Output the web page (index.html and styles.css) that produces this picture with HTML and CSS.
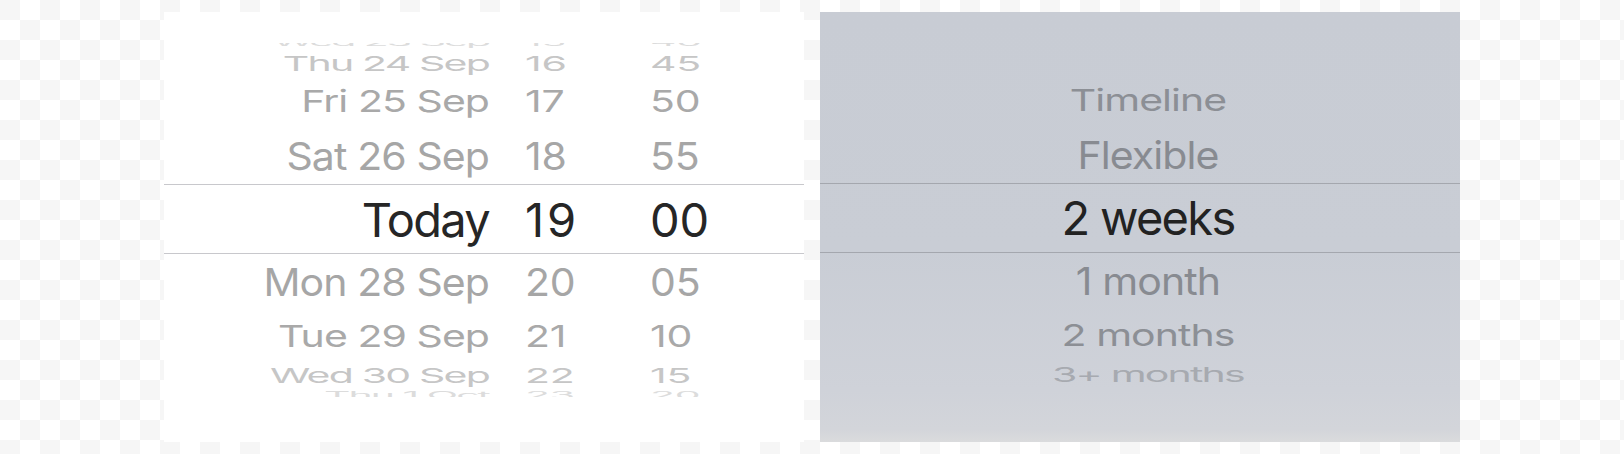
FILE: index.html
```html
<!DOCTYPE html>
<html lang="en">
<head>
<meta charset="utf-8">
<title>Pickers</title>
<link rel="stylesheet" href="styles.css">
</head>
<body>
<div class="stage">
  <div class="picker picker-date">
    <div class="clip">
      <div class="wheel">
        <div class="row r4"><span class="d">Wed 23 Sep</span><span class="h">15</span><span class="m">40</span></div>
        <div class="row r3"><span class="d">Thu 24 Sep</span><span class="h">16</span><span class="m">45</span></div>
        <div class="row r2"><span class="d">Fri 25 Sep</span><span class="h">17</span><span class="m">50</span></div>
        <div class="row r1"><span class="d">Sat 26 Sep</span><span class="h">18</span><span class="m">55</span></div>
        <div class="row sel"><span class="d">Today</span><span class="h">19</span><span class="m">00</span></div>
        <div class="row r1"><span class="d">Mon 28 Sep</span><span class="h">20</span><span class="m">05</span></div>
        <div class="row r2"><span class="d">Tue 29 Sep</span><span class="h">21</span><span class="m">10</span></div>
        <div class="row r3"><span class="d">Wed 30 Sep</span><span class="h">22</span><span class="m">15</span></div>
        <div class="row r4"><span class="d">Thu 1 Oct</span><span class="h">23</span><span class="m">20</span></div>
      </div>
    </div>
  </div>
  <div class="picker picker-list">
    <div class="clip">
      <div class="wheel">
        <div class="row r4"></div>
        <div class="row r3"></div>
        <div class="row r2"><span class="t">Timeline</span></div>
        <div class="row r1"><span class="t">Flexible</span></div>
        <div class="row sel"><span class="t">2 weeks</span></div>
        <div class="row r1"><span class="t">1 month</span></div>
        <div class="row r2"><span class="t">2 months</span></div>
        <div class="row r3"><span class="t">3+ months</span></div>
        <div class="row r4"></div>
      </div>
    </div>
  </div>
</div>
</body>
</html>
```

FILE: styles.css
```css
* { box-sizing: border-box; }

html, body {
  margin: 0;
  padding: 0;
}

body {
  width: 1624px;
  height: 454px;
  overflow: hidden;
  font-family: "Inter", "Noto Sans", sans-serif;
  background-color: #ffffff;
  background-image: conic-gradient(#ffffff 0 25%, #f6f6f6 0 50%, #ffffff 0 75%, #f6f6f6 0);
  background-size: 40px 40px;
}

.stage {
  display: flex;
  gap: 16px;
  padding: 12px 164px;
}

.picker {
  width: 640px;
  height: 430px;
  padding-top: 31px;
}

.picker-date {
  background: #ffffff;
}

.picker-list {
  background: linear-gradient(to bottom, #c8ccd4 0%, #c9cdd5 55%, #cfd2d9 88%, #d3d5da 97%, #dadbdd 100%);
}

.clip {
  height: 354px;
  overflow: hidden;
}

.picker-date .wheel { margin-top: -9px; }
.picker-list .wheel { margin-top: -10px; }

.row {
  display: grid;
  grid-template-columns: 325px 89px 1fr;
  column-gap: 36px;
  font-size: 41px;
  white-space: nowrap;
  transform-origin: 320px 50%;
}

.row .d { text-align: right; }

.row .h,
.row .m {
  letter-spacing: -0.2px;
}

.picker-list .row {
  display: flex;
  justify-content: center;
  padding-left: 16px;
}

.row.sel {
  height: 70px;
  line-height: 66px;
  font-size: 47px;
  border-top: 1px solid #c8c8cc;
  border-bottom: 1px solid #c8c8cc;
  color: #262626;
  padding-top: 2px;
}

.row.sel .d,
.row.sel .t { letter-spacing: -1.7px; }

.row.sel .h { letter-spacing: 3px; }

.picker-list .row.sel {
  border-color: #a4a7ae;
  color: #222222;
  padding-top: 0;
  line-height: 68px;
}

.row.r1 { height: 56px; line-height: 56px; transform: scale(1, 0.94); color: #a6a6a6; }
.row.r2 { height: 53px; line-height: 53px; transform: scale(1, 0.74); color: #a9a9a9; }
.row.r3 { height: 24px; line-height: 24px; transform: scale(1, 0.5); color: #c6c6c6; }
.row.r4 { height: 17px; line-height: 17px; transform: scale(1, 0.26); color: #dcdcdc; }

.row.r1 .d, .row.r1 .t { letter-spacing: -0.9px; }
.row.r2 .d, .row.r2 .t { letter-spacing: -0.95px; }
.row.r3 .d, .row.r3 .t { letter-spacing: -1.8px; }
.row.r4 .d, .row.r4 .t { letter-spacing: -2px; }

.picker-list .row.r1 { color: #888b91; }
.picker-list .row.r2 { color: #8c8f95; }
.picker-list .row.r3 { color: #a7aab0; }
```
